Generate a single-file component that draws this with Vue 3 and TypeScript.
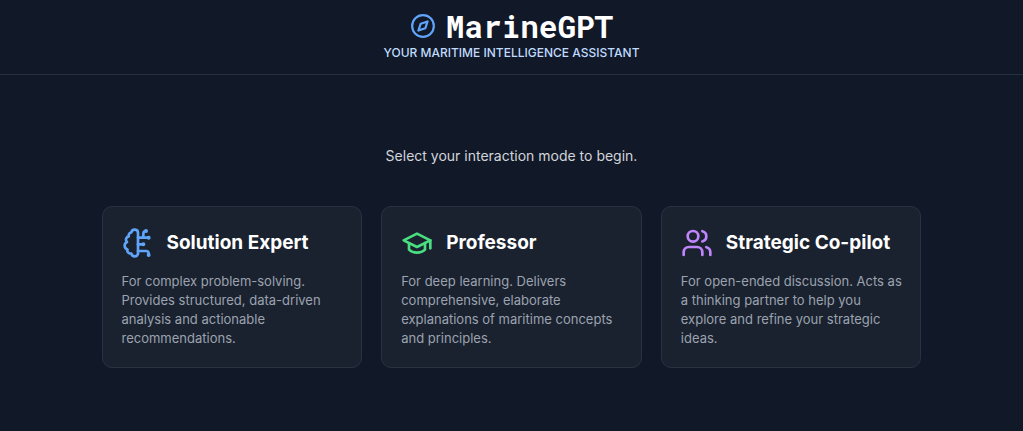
<script setup lang="ts">
interface Mode {
  id: string
  title: string
  description: string
  paths: string[]
}

const modes: Mode[] = [
  {
    id: 'expert',
    title: 'Solution Expert',
    description:
      'For complex problem-solving. Provides structured, data-driven analysis and actionable recommendations.',
    paths: [
      'M12 4.5a2.5 2.5 0 0 0-4.96-.46 2.5 2.5 0 0 0-1.98 3 2.5 2.5 0 0 0-1.32 4.24 3 3 0 0 0 .34 5.58 2.5 2.5 0 0 0 2.96 3.08 2.5 2.5 0 0 0 4.91.05L12 20V4.5Z',
      'M16 8V5c0-1.1.9-2 2-2',
      'M12 13h4',
      'M12 18h6a2 2 0 0 1 2 2v1',
      'M12 8h8',
      'M20.5 8a.5.5 0 1 1-1 0 .5.5 0 0 1 1 0Z',
      'M16.5 13a.5.5 0 1 1-1 0 .5.5 0 0 1 1 0Z',
      'M20.5 21a.5.5 0 1 1-1 0 .5.5 0 0 1 1 0Z',
      'M18.5 3a.5.5 0 1 1-1 0 .5.5 0 0 1 1 0Z',
    ],
  },
  {
    id: 'professor',
    title: 'Professor',
    description:
      'For deep learning. Delivers comprehensive, elaborate explanations of maritime concepts and principles.',
    paths: ['M22 10v6', 'M2 10l10-5 10 5-10 5z', 'M6 12v5c3 3 9 3 12 0v-5'],
  },
  {
    id: 'copilot',
    title: 'Strategic Co-pilot',
    description:
      'For open-ended discussion. Acts as a thinking partner to help you explore and refine your strategic ideas.',
    paths: [
      'M16 21v-2a4 4 0 0 0-4-4H6a4 4 0 0 0-4 4v2',
      'M13 7a4 4 0 1 1-8 0 4 4 0 0 1 8 0Z',
      'M22 21v-2a4 4 0 0 0-3-3.87',
      'M16 3.13a4 4 0 0 1 0 7.75',
    ],
  },
]

const emit = defineEmits<{ select: [id: string] }>()
</script>

<template>
  <div class="page">
    <header class="header">
      <div class="brand">
        <svg class="logo" viewBox="0 0 24 24" aria-hidden="true">
          <circle cx="12" cy="12" r="10" />
          <path d="m16.24 7.76-2.12 6.36-6.36 2.12 2.12-6.36z" />
        </svg>
        <h1>MarineGPT</h1>
      </div>
      <p class="tagline">YOUR MARITIME INTELLIGENCE ASSISTANT</p>
    </header>

    <main class="main">
      <p class="prompt">Select your interaction mode to begin.</p>
      <div class="cards">
        <button
          v-for="mode in modes"
          :key="mode.id"
          type="button"
          class="card"
          @click="emit('select', mode.id)"
        >
          <span class="card-head">
            <svg class="icon" :class="mode.id" viewBox="0 0 24 24" aria-hidden="true">
              <path v-for="d in mode.paths" :key="d" :d="d" />
            </svg>
            <span class="card-title">{{ mode.title }}</span>
          </span>
          <span class="description">{{ mode.description }}</span>
        </button>
      </div>
    </main>
  </div>
</template>

<style>
body {
  margin: 0;
  background: #111827;
}
</style>

<style scoped>
.page {
  display: flex;
  flex-direction: column;
  min-height: 100vh;
  color: #fff;
  background: #111827;
  font-family: Inter, 'Liberation Sans', sans-serif;
}

.header {
  display: flex;
  flex-direction: column;
  align-items: center;
  padding: 9px 20px 12px;
  border-bottom: 1px solid #252f3d;
}

.brand {
  display: flex;
  align-items: center;
  gap: 10px;
}

h1 {
  margin: 0;
  font-family: 'Roboto Mono', 'DejaVu Sans Mono', monospace;
  font-size: 31px;
  font-weight: 700;
  line-height: 34px;
}

svg {
  flex: none;
  fill: none;
  stroke-width: 2;
  stroke-linecap: round;
  stroke-linejoin: round;
}

.logo {
  width: 26px;
  height: 26px;
  stroke: #60a5fa;
}

.tagline {
  margin: 0;
  color: #bfdbfe;
  font-size: 12px;
  font-weight: 500;
  line-height: 19px;
}

.main {
  width: 100%;
  max-width: 860px;
  box-sizing: border-box;
  margin: 0 auto;
  padding: 69px 20px 40px;
}

.prompt {
  margin: 0 0 38px;
  color: #d1d5db;
  font-size: 14px;
  line-height: 24px;
  text-align: center;
}

.cards {
  display: grid;
  grid-template-columns: repeat(auto-fit, minmax(220px, 1fr));
  gap: 19px;
}

.card {
  display: flex;
  flex-direction: column;
  gap: 13px;
  padding: 20px 16px 19px 19px;
  border: 1px solid #283341;
  border-radius: 10px;
  color: inherit;
  background: #1a222f;
  font: inherit;
  text-align: left;
  cursor: pointer;
}

.card:hover {
  border-color: #3b82f6;
}

.card-head {
  display: flex;
  align-items: center;
  gap: 13px;
}

.icon {
  width: 32px;
  height: 32px;
}

.expert {
  stroke: #60a5fa;
}

.professor {
  stroke: #4ade80;
}

.copilot {
  stroke: #c084fc;
}

.card-title {
  font-size: 19px;
  font-weight: 700;
  line-height: 26px;
}

.description {
  color: #9ca3af;
  font-size: 13px;
  line-height: 19px;
}
</style>
